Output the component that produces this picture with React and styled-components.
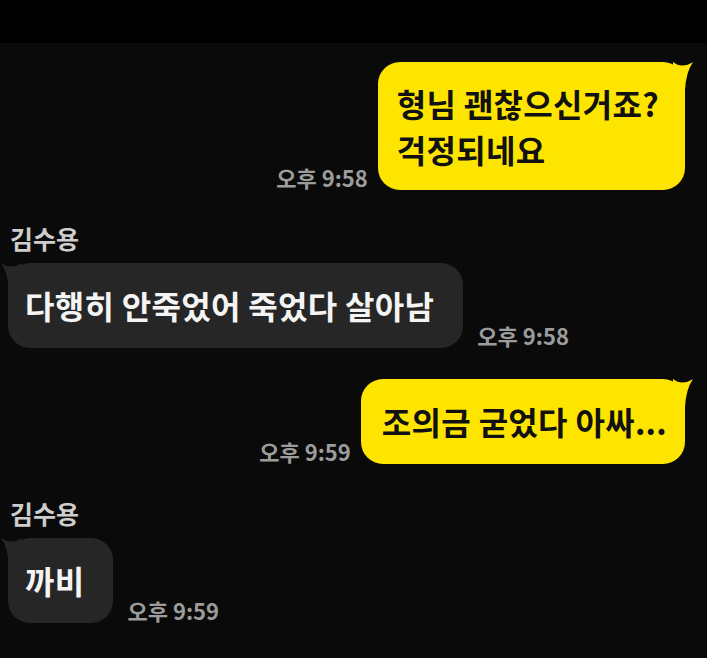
import React from 'react'
import styled, { createGlobalStyle } from 'styled-components'

const GlobalStyle = createGlobalStyle`
  html, body {
    margin: 0;
    padding: 0;
    background: #0a0a0a;
  }
  body {
    font-family: "Noto Sans CJK KR", "Noto Sans", sans-serif;
  }
`

const Screen = styled.div`
  width: 707px;
  height: 658px;
  background: #0a0a0a;
  overflow: hidden;
  display: flex;
  flex-direction: column;
`

const TopBar = styled.div`
  height: 43px;
  background: #000;
  flex-shrink: 0;
`

const ChatList = styled.div`
  display: flex;
  flex-direction: column;
`

const Row = styled.div`
  display: flex;
  align-items: flex-end;
  justify-content: ${p => (p.mine ? 'flex-end' : 'flex-start')};
  margin-top: ${p => p.top || 0}px;
  padding: ${p => (p.mine ? '0 22px 0 0' : '0 0 0 8px')};
  gap: ${p => (p.mine ? 10 : 14)}px;
`

const Group = styled.div`
  display: flex;
  flex-direction: column;
  margin-top: ${p => p.top}px;
`

const Name = styled.div`
  font-size: 25px;
  font-weight: 700;
  color: #cdcdcd;
  line-height: 28px;
  padding-left: 10px;
  margin-bottom: 11px;
`

const Bubble = styled.div`
  position: relative;
  background: ${p => (p.mine ? '#fee500' : '#262626')};
  color: ${p => (p.mine ? '#111' : '#f4f4f4')};
  font-size: 32px;
  font-weight: 700;
  line-height: 46px;
  letter-spacing: 0.3px;
  padding: ${p => p.pad};
  border-radius: 22px;
  white-space: nowrap;
`

const Tail = styled.svg`
  position: absolute;
  top: 0;
  ${p => (p.mine ? 'right: -8px;' : 'left: -7px;')}
  width: 20px;
  height: 28px;
`

const Time = styled.div`
  font-size: 22px;
  font-weight: 700;
  color: #9c9c9c;
  line-height: 24px;
  margin-bottom: 1px;
  white-space: nowrap;
`

function Message({ mine, children, time, pad }) {
  const bubble = (
    <Bubble mine={mine} pad={pad}>
      <Tail mine={mine} viewBox="0 0 20 28">
        {mine ? (
          <path d="M0 0 Q9 7 20 0 Q13 10 12 28 L0 28 Z" fill="#fee500" />
        ) : (
          <path d="M20 0 Q11 7 0 0 Q7 10 8 28 L20 28 Z" fill="#262626" />
        )}
      </Tail>
      {children}
    </Bubble>
  )
  return mine ? (
    <>
      <Time>{time}</Time>
      {bubble}
    </>
  ) : (
    <>
      {bubble}
      <Time>{time}</Time>
    </>
  )
}

export default function App() {
  return (
    <Screen>
      <GlobalStyle />
      <TopBar />
      <ChatList>
        <Row mine top={19}>
          <Message mine time="오후 9:58" pad="18px 26px 18px 19px">
            형님 괜찮으신거죠?
            <br />
            걱정되네요
          </Message>
        </Row>

        <Group top={34}>
          <Name>김수용</Name>
          <Row>
            <Message time="오후 9:58" pad="19px 29px 20px 17px">
              다행히 안죽었어 죽었다 살아남
            </Message>
          </Row>
        </Group>

        <Row mine top={31}>
          <Message mine time="오후 9:59" pad="19px 18px 20px 21px">
            조의금 굳었다 아싸...
          </Message>
        </Row>

        <Group top={35}>
          <Name>김수용</Name>
          <Row>
            <Message time="오후 9:59" pad="19px 29px 20px 17px">
              까비
            </Message>
          </Row>
        </Group>
      </ChatList>
    </Screen>
  )
}
